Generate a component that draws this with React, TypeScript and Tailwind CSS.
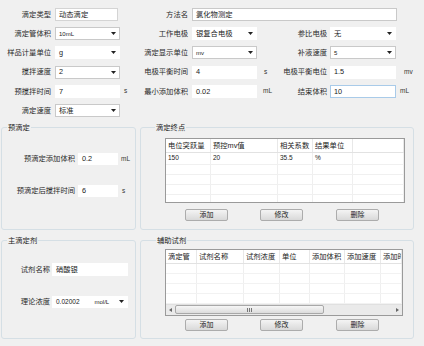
import React from 'react';

type P = { children?: React.ReactNode; className?: string };

const Lbl = ({ children, className = '' }: P) => (
  <div className={`shrink-0 text-right leading-none whitespace-nowrap text-[#2a2a2a] ${className}`}>{children}</div>
);

const Box = ({ children, className = '' }: P) => (
  <div className={`shrink-0 flex items-center h-full bg-white border px-[3px] leading-none whitespace-nowrap ${className}`}>
    {children}
  </div>
);

const Arrow = () => (
  <svg width="5" height="3" viewBox="0 0 5 3" className="ml-auto shrink-0">
    <path d="M0 0h5L2.5 3z" fill="#222" />
  </svg>
);

const Sel = ({ children, className = '' }: P) => (
  <Box className={className}>
    <span>{children}</span>
    <Arrow />
  </Box>
);

const Unit = ({ children, className = '' }: P) => (
  <div className={`shrink-0 leading-none text-[6.5px] text-[#333] ${className}`}>{children}</div>
);

const Btn = ({ children, className = '' }: P) => (
  <button
    className={`w-[43px] h-[12px] flex items-center justify-center leading-none text-[7px] text-[#222] border border-[#acacac] rounded-[2px] bg-gradient-to-b from-[#f4f4f4] to-[#d9d9d9] ${className}`}
  >
    {children}
  </button>
);

const Buttons = ({ className = '' }: P) => (
  <div className={`flex ${className}`}>
    <Btn className="ml-[20px]">添加</Btn>
    <Btn className="ml-[32px]">修改</Btn>
    <Btn className="ml-[33px]">删除</Btn>
  </div>
);

const endCols = [
  { w: 'w-[45px]', h: '电位突跃量', v: '150' },
  { w: 'w-[67px]', h: '预控mv值', v: '20' },
  { w: 'w-[35px]', h: '相关系数', v: '35.5' },
  { w: 'w-[40px]', h: '结果单位', v: '%' },
  { w: 'flex-1', h: '', v: '' },
];

const auxCols = [
  { w: 'w-[31px]', h: '滴定管' },
  { w: 'w-[47px]', h: '试剂名称' },
  { w: 'w-[36px]', h: '试剂浓度' },
  { w: 'w-[30px]', h: '单位' },
  { w: 'w-[35px]', h: '添加体积' },
  { w: 'w-[36px]', h: '添加速度' },
  { w: 'flex-1', h: '添加时间' },
];

export default function App() {
  const fieldBorder = 'border-[#c9c9c9]';

  return (
    <div className="w-[424px] h-[346px] overflow-hidden bg-[#f0f0f0] text-[7.3px] font-['Liberation_Sans','Noto_Sans_CJK_SC',sans-serif] text-[#222]">
      {/* top parameter form */}
      <div className="flex flex-col gap-[6.2px] pt-[8px]">
        <div className="flex items-center h-[13px]">
          <Lbl className="w-[51px]">滴定类型</Lbl>
          <Box className="ml-[4px] w-[63px] bg-[#f5f5f5] border-[#d4d4d4]">动态滴定</Box>
          <div className="w-[22px]" />
          <Lbl className="w-[48px]">方法名</Lbl>
          <Box className={`ml-[4px] w-[205px] ${fieldBorder}`}>氯化物测定</Box>
        </div>

        <div className="flex items-center h-[13px]">
          <Lbl className="w-[51px]">滴定管体积</Lbl>
          <Sel className={`ml-[4px] w-[65px] ${fieldBorder}`}><span className="text-[6px]">10mL</span></Sel>
          <div className="w-[20px]" />
          <Lbl className="w-[48px]">工作电极</Lbl>
          <Sel className="ml-[4px] w-[65px] border-white">银复合电极</Sel>
          <div className="w-[22px]" />
          <Lbl className="w-[48px]">参比电极</Lbl>
          <Sel className="ml-[3px] w-[66px] border-white">无</Sel>
        </div>

        <div className="flex items-center h-[13px]">
          <Lbl className="w-[51px]">样品计量单位</Lbl>
          <Sel className="ml-[4px] w-[65px] border-white">g</Sel>
          <div className="w-[20px]" />
          <Lbl className="w-[48px]">滴定显示单位</Lbl>
          <Sel className={`ml-[4px] w-[65px] ${fieldBorder}`}><span className="text-[6px]">mv</span></Sel>
          <div className="w-[22px]" />
          <Lbl className="w-[48px]">补液速度</Lbl>
          <Sel className={`ml-[3px] w-[66px] ${fieldBorder}`}><span className="text-[6px]">5</span></Sel>
        </div>

        <div className="flex items-center h-[13px]">
          <Lbl className="w-[51px]">搅拌速度</Lbl>
          <Sel className={`ml-[4px] w-[65px] ${fieldBorder}`}>2</Sel>
          <div className="w-[20px]" />
          <Lbl className="w-[48px]">电极平衡时间</Lbl>
          <Box className="ml-[4px] w-[65px] border-white">4</Box>
          <Unit className="w-[22px] pl-[7px]">s</Unit>
          <Lbl className="w-[48px]">电极平衡电位</Lbl>
          <Box className="ml-[3px] w-[66px] border-white">1.5</Box>
          <Unit className="pl-[8px]">mv</Unit>
        </div>

        <div className="flex items-center h-[13px]">
          <Lbl className="w-[51px]">预搅拌时间</Lbl>
          <Box className="ml-[4px] w-[65px] border-white">7</Box>
          <Unit className="w-[20px] pl-[4px]">s</Unit>
          <Lbl className="w-[48px]">最小添加体积</Lbl>
          <Box className="ml-[4px] w-[65px] border-white">0.02</Box>
          <Unit className="w-[22px] pl-[6px]">mL</Unit>
          <Lbl className="w-[48px]">结束体积</Lbl>
          <Box className="ml-[3px] w-[66px] border-[#a9cbe9]">10</Box>
          <Unit className="pl-[4px]">mL</Unit>
        </div>

        <div className="flex items-center h-[13px]">
          <Lbl className="w-[51px]">滴定速度</Lbl>
          <Sel className={`ml-[4px] w-[65px] ${fieldBorder}`}>标准</Sel>
        </div>
      </div>

      {/* pre-titration + end point */}
      <div className="flex mt-[7px]">
        <fieldset className="ml-[1px] w-[135px] h-[106px] border border-[#d5dfe5] rounded-[3px]">
          <legend className="ml-[5px] px-[1px] leading-none h-[8px]">预滴定</legend>
          <div className="flex items-center h-[12px] mt-[21px]">
            <Lbl className="w-[73px]">预滴定添加体积</Lbl>
            <Box className="ml-[3px] w-[40px] border-white">0.2</Box>
            <Unit className="pl-[3px]">mL</Unit>
          </div>
          <div className="flex items-center h-[12px] mt-[20px]">
            <Lbl className="w-[73px]">预滴定后搅拌时间</Lbl>
            <Box className="ml-[3px] w-[40px] border-white">6</Box>
            <Unit className="pl-[4px]">s</Unit>
          </div>
        </fieldset>

        <fieldset className="ml-[4px] w-[274px] h-[106px] border border-[#d5dfe5] rounded-[3px]">
          <legend className="ml-[14px] px-[1px] leading-none h-[8px]">滴定终点</legend>
          <div className="ml-[24px] mt-[6px] w-[240px] h-[65px] flex flex-col bg-white border border-[#9a9a9a] overflow-hidden">
            <div className="flex h-[14px] shrink-0 border-b border-[#e2e2e2]">
              {endCols.map((c, i) => (
                <div key={i} className={`${c.w} flex items-center pl-[2px] leading-none whitespace-nowrap border-r border-[#e8e8e8]`}>
                  {c.h}
                </div>
              ))}
            </div>
            {[0, 1, 2, 3, 4].map((r) => (
              <div key={r} className={`flex shrink-0 border-b border-[#f0f0f0] ${r === 0 ? 'h-[12px]' : 'h-[10px]'}`}>
                {endCols.map((c, i) => (
                  <div key={i} className={`${c.w} flex items-center pl-[2px] leading-none text-[6.5px] border-r border-[#efefef]`}>
                    {r === 0 ? c.v : ''}
                  </div>
                ))}
              </div>
            ))}
          </div>
          <Buttons className="ml-[24px] mt-[6px]" />
        </fieldset>
      </div>

      {/* main titrant + auxiliary reagents */}
      <div className="flex mt-[7px]">
        <fieldset className="ml-[1px] w-[135px] h-[102px] border border-[#d5dfe5] rounded-[3px]">
          <legend className="ml-[5px] px-[1px] leading-none h-[8px]">主滴定剂</legend>
          <div className="flex items-center h-[13px] mt-[18px]">
            <Lbl className="w-[48px]">试剂名称</Lbl>
            <Box className="ml-[2px] w-[76px] border-white">硝酸银</Box>
          </div>
          <div className="flex items-center h-[12px] mt-[20px]">
            <Lbl className="w-[48px]">理论浓度</Lbl>
            <Box className="ml-[2px] w-[76px] border-white">
              <span className="text-[6.5px]">0.02002</span>
              <span className="ml-[15px] text-[6px]">mol/L</span>
              <Arrow />
            </Box>
          </div>
        </fieldset>

        <fieldset className="ml-[4px] w-[274px] h-[102px] border border-[#d5dfe5] rounded-[3px]">
          <legend className="ml-[15px] px-[1px] leading-none h-[8px]">辅助试剂</legend>
          <div className="ml-[24px] mt-[4px] w-[238px] h-[67px] flex flex-col bg-white border border-[#9a9a9a] overflow-hidden">
            <div className="flex h-[14px] shrink-0 border-b border-[#e2e2e2]">
              {auxCols.map((c, i) => (
                <div key={i} className={`${c.w} flex items-center pl-[2px] leading-none whitespace-nowrap overflow-hidden border-r border-[#e8e8e8]`}>
                  {c.h}
                </div>
              ))}
            </div>
            <div className="flex-1 flex flex-col overflow-hidden">
              {[0, 1, 2, 3].map((r) => (
                <div key={r} className="flex h-[10px] shrink-0 border-b border-[#f2f2f2]">
                  {auxCols.map((c, i) => (
                    <div key={i} className={`${c.w} border-r border-[#efefef]`} />
                  ))}
                </div>
              ))}
            </div>
            {/* horizontal scrollbar */}
            <div className="flex items-center h-[11px] shrink-0 bg-[#eaeaea] border-t border-[#e0e0e0]">
              <div className="w-[9px] flex items-center justify-center">
                <svg width="3" height="4" viewBox="0 0 3 4"><path d="M3 0v4L0 2z" fill="#666" /></svg>
              </div>
              <div className="w-[149px] h-[9px] flex items-center justify-center rounded-[2px] border border-[#a8a8a8] bg-gradient-to-b from-[#f6f6f6] to-[#dcdcdc]">
                <div className="flex gap-[1px]">
                  <div className="w-[1px] h-[4px] bg-[#777]" />
                  <div className="w-[1px] h-[4px] bg-[#777]" />
                  <div className="w-[1px] h-[4px] bg-[#777]" />
                </div>
              </div>
              <div className="flex-1" />
              <div className="w-[9px] flex items-center justify-center">
                <svg width="3" height="4" viewBox="0 0 3 4"><path d="M0 0v4L3 2z" fill="#666" /></svg>
              </div>
            </div>
          </div>
          <Buttons className="ml-[24px] mt-[3px]" />
        </fieldset>
      </div>
    </div>
  );
}
